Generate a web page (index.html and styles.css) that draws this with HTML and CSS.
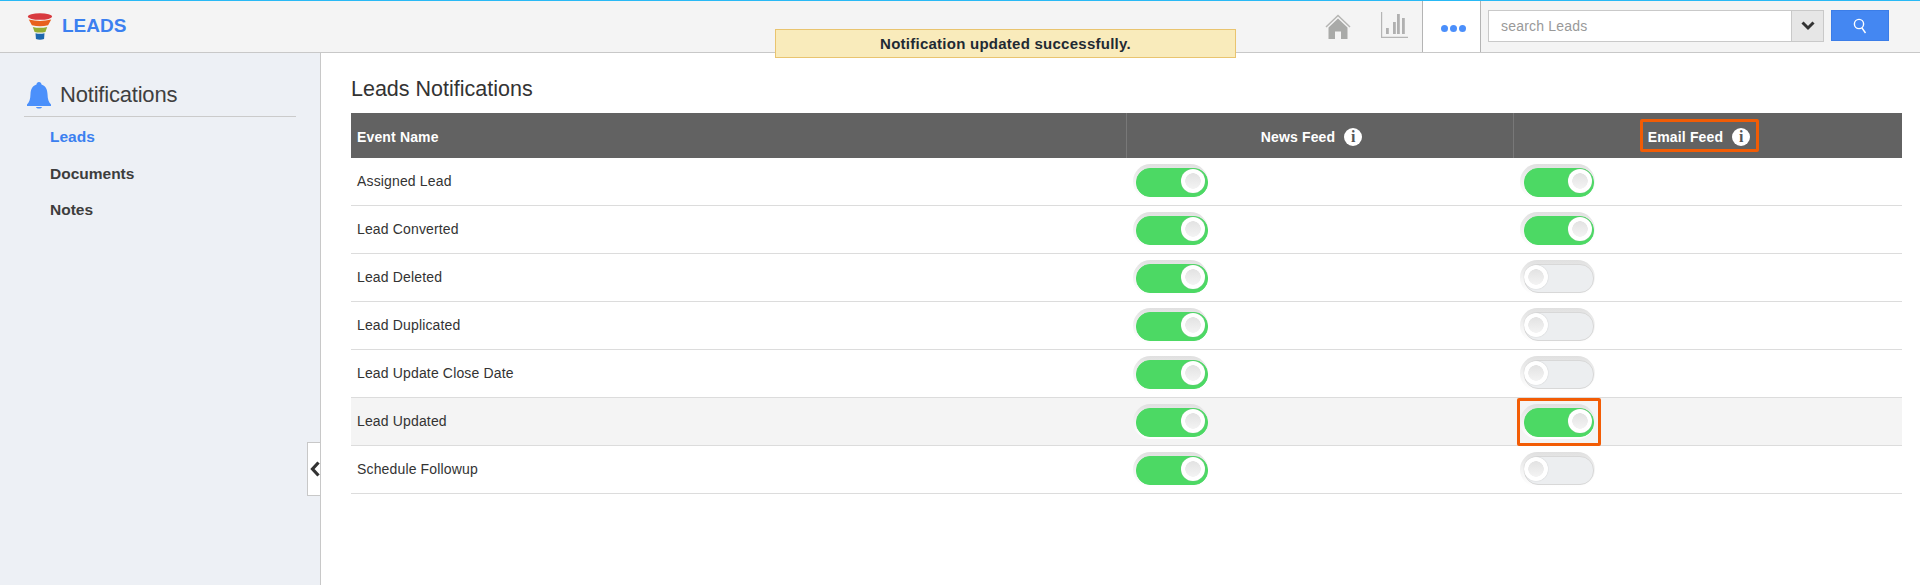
FILE: index.html
```html
<!DOCTYPE html>
<html lang="en">
<head>
<meta charset="utf-8">
<title>Leads Notifications</title>
<link rel="stylesheet" href="styles.css">
</head>
<body>
<header class="topbar">
  <div class="brand">
    <svg class="funnel" width="26" height="27" viewBox="0 0 28 30">
      <ellipse cx="14" cy="4" rx="13.5" ry="3.6" fill="#d83a3f"/>
      <path d="M1.5 7.2 Q14 10.5 26.5 7.2 L23 13.5 Q14 15.8 5 13.5Z" fill="#e8611c"/>
      <path d="M6 15.5 Q14 17.5 22 15.5 L20 21 Q14 22.5 8 21Z" fill="#93ad32"/>
      <path d="M9 22.5 Q14 23.8 19 22.5 L18.5 29 Q14 30.5 9.5 29Z" fill="#1c68ae"/>
    </svg>
    <span class="brand-name">LEADS</span>
  </div>
  <div class="top-actions">
    <svg class="icon-home" width="26" height="26" viewBox="0 0 26 26">
      <path d="M1 13 L13 1.5 L25 13" fill="none" stroke="#b5b5b3" stroke-width="1.5"/>
      <path d="M13 4.5 L22.5 13.5 V25 H16 V17.5 H10 V25 H3.5 V13.5Z" fill="#a9aaa8"/>
    </svg>
    <svg class="icon-chart" width="27" height="26" viewBox="0 0 27 26">
      <path d="M.6 0 V25.4 H27" fill="none" stroke="#b5b5b5" stroke-width="1.2"/>
      <path d="M5 16h2.8v6H5zM12 10h2.8v12H12zM16 2h2.8v20H16zM21 6h2.8v16H21z" fill="#b0b0b0"/>
    </svg>
    <div class="more-tab"><i></i><i></i><i></i></div>
    <div class="search">
      <span class="search-input">search Leads</span>
      <span class="search-drop">
        <svg width="14" height="10" viewBox="0 0 14 10"><path d="M1.5 1.5 L7 7 L12.5 1.5" fill="none" stroke="#333" stroke-width="3"/></svg>
      </span>
    </div>
    <button class="search-btn" type="button">
      <svg width="14" height="16" viewBox="0 0 14 16"><circle cx="6" cy="6" r="4.6" fill="none" stroke="#fff" stroke-width="1.4"/><path d="M9 10 L12.5 15" stroke="#fff" stroke-width="1.4"/></svg>
    </button>
  </div>
</header>
<div class="toast">Notification updated successfully.</div>
<div class="page">
  <aside class="sidebar">
    <div class="side-title">
      <svg width="26" height="28" viewBox="0 0 26 28"><path d="M13 1 C14.5 1 15.4 2 15.5 3.6 C20 5 21.3 9 21.5 13 C21.7 18 22.5 21 25 23.5 V25 H1 V23.5 C3.5 21 4.3 18 4.5 13 C4.7 9 6 5 10.5 3.6 C10.6 2 11.5 1 13 1Z" fill="#4b90fb"/><path d="M10 26 H16 C15.5 28 10.5 28 10 26Z" fill="#4b90fb"/></svg>
      <span>Notifications</span>
    </div>
    <nav class="side-nav">
      <a class="active">Leads</a>
      <a>Documents</a>
      <a>Notes</a>
    </nav>
    <div class="collapse">
      <svg width="10" height="16" viewBox="0 0 10 16"><path d="M8.5 1.5 L2.5 8 L8.5 14.5" fill="none" stroke="#333" stroke-width="3.2"/></svg>
    </div>
  </aside>
  <main class="content">
    <h1>Leads Notifications</h1>
    <div class="table">
      <div class="row head">
        <div class="cell">Event Name</div>
        <div class="cell center"><span class="head-label"><span>News Feed</span><b class="info">i</b></span></div>
        <div class="cell center"><span class="head-label marked"><span>Email Feed</span><b class="info">i</b></span></div>
      </div>
      <div class="row"><div class="cell">Assigned Lead</div><div class="cell"><span class="toggle on"></span></div><div class="cell"><span class="toggle on"></span></div></div>
      <div class="row"><div class="cell">Lead Converted</div><div class="cell"><span class="toggle on"></span></div><div class="cell"><span class="toggle on"></span></div></div>
      <div class="row"><div class="cell">Lead Deleted</div><div class="cell"><span class="toggle on"></span></div><div class="cell"><span class="toggle"></span></div></div>
      <div class="row"><div class="cell">Lead Duplicated</div><div class="cell"><span class="toggle on"></span></div><div class="cell"><span class="toggle"></span></div></div>
      <div class="row"><div class="cell">Lead Update Close Date</div><div class="cell"><span class="toggle on"></span></div><div class="cell"><span class="toggle"></span></div></div>
      <div class="row hover"><div class="cell">Lead Updated</div><div class="cell"><span class="toggle on"></span></div><div class="cell"><span class="mark"><span class="toggle on"></span></span></div></div>
      <div class="row"><div class="cell">Schedule Followup</div><div class="cell"><span class="toggle on"></span></div><div class="cell"><span class="toggle"></span></div></div>
    </div>
  </main>
</div>
</body>
</html>
```
FILE: styles.css
```css
* { box-sizing: border-box; }
html, body { margin: 0; height: 100%; }
body {
  font-family: "Liberation Sans", Arial, sans-serif;
  color: #333;
  background: #fff;
  overflow: hidden;
  position: relative;
  display: flex;
  flex-direction: column;
}
.topbar {
  height: 53px;
  flex: none;
  display: flex;
  justify-content: space-between;
  background: #f4f4f4;
  border-top: 1px solid #29b9f5;
  border-bottom: 1px solid #c8c8c8;
}
.brand { display: flex; align-items: center; gap: 9px; padding-left: 27px; padding-bottom: 1px; }
.brand-name { font-size: 19px; font-weight: 700; color: #3b80f0; }
.top-actions { display: flex; align-items: stretch; padding-right: 31px; }
.icon-home { align-self: flex-start; margin: 13px 30px 0 0; }
.icon-chart { align-self: flex-start; margin: 11px 14px 0 0; }
.more-tab {
  width: 59px;
  background: #fff;
  border-left: 1px solid #b4b4b4;
  border-right: 1px solid #b4b4b4;
  display: flex;
  align-items: center;
  justify-content: center;
  gap: 2px;
  padding: 3px 0 0 4px;
}
.more-tab i { width: 7px; height: 7px; border-radius: 50%; background: #4b8ffb; }
.search {
  align-self: flex-start;
  margin: 9px 0 0 7px;
  width: 336px;
  height: 32px;
  display: flex;
  border: 1px solid #c9c9c9;
  background: #fff;
}
.search-input { flex: 1; padding: 0 12px; font-size: 14px; letter-spacing: .2px; line-height: 30px; color: #999; }
.search-drop {
  width: 32px;
  background: #e6e6e6;
  border-left: 1px solid #c9c9c9;
  display: flex;
  align-items: center;
  justify-content: center;
}
.search-btn {
  align-self: flex-start;
  margin: 9px 0 0 7px;
  width: 58px;
  height: 31px;
  padding: 0;
  background: #4487f2;
  border: 1px solid #3b7de8;
  display: flex;
  align-items: center;
  justify-content: center;
}
.toast {
  position: absolute;
  left: 775px;
  top: 29px;
  width: 461px;
  height: 29px;
  background: #f9ebbb;
  border: 1px solid #e9c46f;
  color: #1f2a33;
  font-size: 15px;
  font-weight: 700;
  line-height: 27px;
  text-align: center;
  letter-spacing: .25px;
  z-index: 2;
}
.page { flex: 1; display: flex; min-height: 0; }
.sidebar {
  width: 321px;
  flex: none;
  position: relative;
  background: #edf0f5;
  border-right: 1px solid #c8c8c8;
  padding: 26px 24px 0;
}
.side-title {
  display: flex;
  align-items: center;
  gap: 8px;
  height: 38px;
  padding: 0 0 6px 2px;
  border-bottom: 1px solid #cbcbcb;
  font-size: 22px;
  color: #3f3f3f;
}
.side-title span { letter-spacing: -.2px; }
.side-nav { display: flex; flex-direction: column; padding-left: 26px; }
.side-nav a { height: 36.5px; line-height: 40px; font-size: 15.5px; font-weight: 700; color: #3d3d3d; }
.side-nav a.active { color: #3b80f0; }
.collapse {
  position: absolute;
  right: 0;
  top: 389px;
  width: 13px;
  height: 54px;
  background: #fff;
  border: 1px solid #c8c8c8;
  border-right: 0;
  display: flex;
  align-items: center;
  justify-content: flex-end;
}
.content { flex: 1; padding: 25px 18px 0 30px; min-width: 0; }
h1 { margin: 0 0 12px; font-size: 21.5px; line-height: 23px; font-weight: 400; color: #333; }
.table { display: flex; flex-direction: column; }
.row {
  display: grid;
  grid-template-columns: 775px 387px 1fr;
  height: 48px;
  border-bottom: 1px solid #dcdcdc;
  font-size: 14px;
  letter-spacing: .15px;
  color: #333;
}
.row > .cell:first-child { padding-bottom: 2px; }
.row.hover { background: #f4f4f4; }
.row.head {
  height: 45px;
  background: #626262;
  border-bottom: 0;
  color: #fff;
  font-weight: 700;
}
.row.head > .cell:first-child { padding: 2px 0 0 6px; }
.cell { display: flex; align-items: center; padding-left: 6px; min-width: 0; }
.head .cell + .cell { border-left: 1px solid #787878; }
.cell.center { justify-content: center; padding: 0 17px 0 0; }
.head-label { display: flex; align-items: center; gap: 9px; padding-top: 3px; }
.head-label.marked { padding: 2px 6px 0 5px; height: 33px; border: 3px solid #f25c05; border-radius: 2px; }
.info {
  width: 18px;
  height: 18px;
  border-radius: 50%;
  background: #fff;
  color: #555;
  font: 700 16px/18px "Liberation Serif", serif;
  text-align: center;
}
.toggle {
  position: relative;
  display: block;
  width: 75px;
  height: 35px;
  margin-left: 1px;
  border-radius: 18px;
  background: linear-gradient(#e0e0e0, #f4f4f4 55%, #fff);
}
.toggle::before {
  content: "";
  position: absolute;
  left: 4px;
  top: 4px;
  width: 68px;
  height: 27px;
  border-radius: 14px;
  background: #eceef0;
  border: 1px solid #d8d8d8;
}
.toggle::after {
  content: "";
  position: absolute;
  left: 4px;
  top: 5px;
  width: 24px;
  height: 24px;
  border-radius: 50%;
  background: radial-gradient(circle, transparent 7.5px, #fff 8px), linear-gradient(#dedede, #f8f8f8);
  box-shadow: 0 0 1px #aaa;
}
.toggle.on::before { background: #4cd964; border-color: #4cd964; }
.toggle.on::after { left: 48px; }
.cell:nth-child(2) > .toggle::before { left: 3px; width: 70px; }
.mark { position: relative; display: block; }
.mark::after {
  content: "";
  position: absolute;
  left: -2px;
  right: -6px;
  top: -6px;
  bottom: -7px;
  border: 3px solid #f25c05;
  border-radius: 2px;
}
```
